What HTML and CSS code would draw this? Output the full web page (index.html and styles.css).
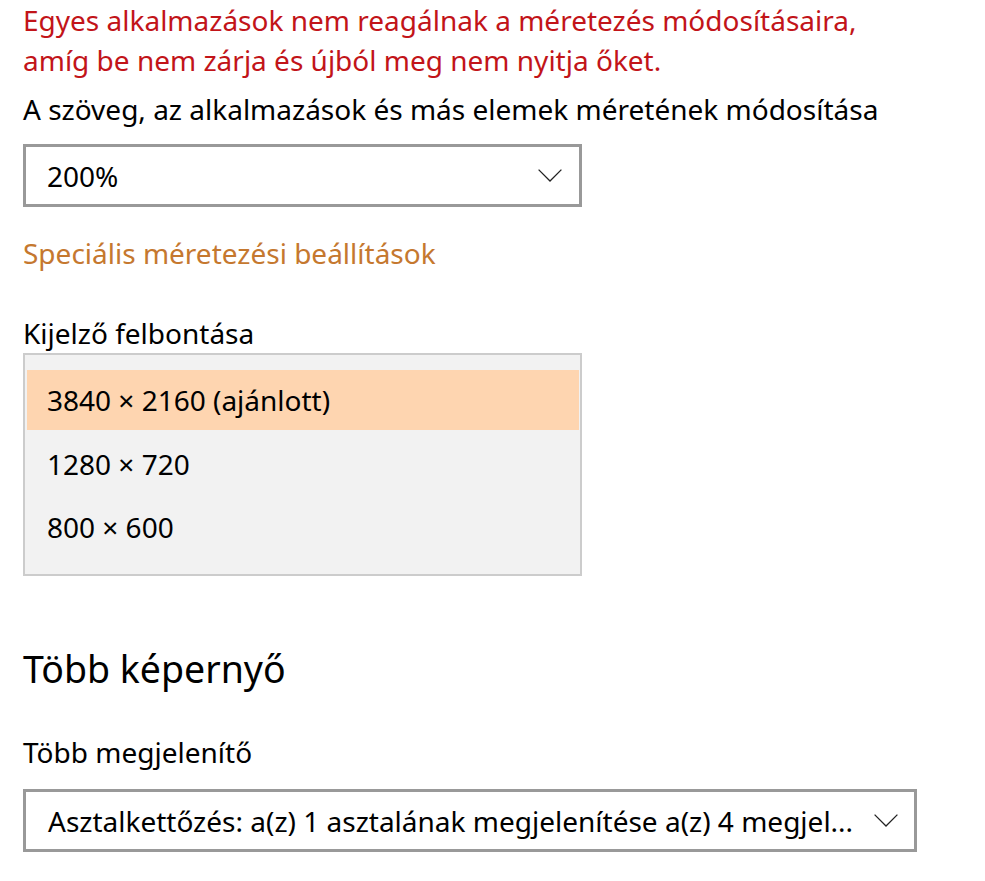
FILE: index.html
```html
<!DOCTYPE html>
<html lang="hu">
<head>
<meta charset="utf-8">
<title>Kijelző</title>
<link rel="stylesheet" href="styles.css">
</head>
<body>
<main class="page">
  <p class="warning">Egyes alkalmazások nem reagálnak a méretezés módosításaira,<br>amíg be nem zárja és újból meg nem nyitja őket.</p>
  <p class="label label-scale">A szöveg, az alkalmazások és más elemek méretének módosítása</p>
  <div class="combo combo-scale">
    <span class="combo-value">200%</span>
    <svg class="chevron" width="24" height="13" viewBox="0 0 24 13"><polyline points="0.6,0.6 12,12 23.4,0.6"/></svg>
  </div>
  <a class="link" href="#">Speciális méretezési beállítások</a>
  <p class="label label-res">Kijelző felbontása</p>
  <ul class="listbox">
    <li class="option selected">3840 × 2160 (ajánlott)</li>
    <li class="option">1280 × 720</li>
    <li class="option">800 × 600</li>
  </ul>
  <h2 class="subtitle">Több képernyő</h2>
  <p class="label label-multi">Több megjelenítő</p>
  <div class="combo combo-multi">
    <span class="combo-value">Asztalkettőzés: a(z) 1 asztalának megjelenítése a(z) 4 megjel...</span>
    <svg class="chevron" width="24" height="13" viewBox="0 0 24 13"><polyline points="0.6,0.6 12,12 23.4,0.6"/></svg>
  </div>
</main>
</body>
</html>
```
FILE: styles.css
```css
html, body {
  margin: 0;
  padding: 0;
  background: #ffffff;
}

body {
  font-family: "Noto Sans", "Open Sans", sans-serif;
  font-size: 28px;
  color: #000000;
}

.page {
  padding-left: 23px;
  display: flex;
  flex-direction: column;
  align-items: flex-start;
}

.warning {
  margin: 0;
  color: #c21419;
  line-height: 40px;
}

.label {
  margin: 0;
  line-height: 40px;
}

.label-scale {
  margin-top: 9px;
}

.combo {
  box-sizing: border-box;
  height: 63px;
  border: 3px solid #999999;
  background: #ffffff;
  display: flex;
  align-items: center;
  justify-content: space-between;
  line-height: 40px;
}

.combo-scale {
  width: 559px;
  margin-top: 15px;
  padding: 0 17px 0 21px;
}

.combo-multi {
  width: 894px;
  margin-top: 17.5px;
  padding: 0 16px 0 22px;
}

.combo-value {
  white-space: nowrap;
}

.chevron {
  flex: none;
}

.chevron polyline {
  fill: none;
  stroke: #222222;
  stroke-width: 1.3;
}

.link {
  margin-top: 25.5px;
  line-height: 40px;
  color: #c5782f;
  text-decoration: none;
}

.label-res {
  margin-top: 40px;
}

.listbox {
  box-sizing: border-box;
  width: 559px;
  margin: 0.5px 0 0;
  padding: 15px 1px 17px 2px;
  list-style: none;
  background: #f2f2f2;
  border: 2px solid #cccccc;
  display: flex;
  flex-direction: column;
  gap: 3.5px;
}

.option {
  height: 60px;
  line-height: 60px;
  padding-left: 20px;
}

.option.selected {
  background: #fed5b0;
}

.subtitle {
  margin: 67.5px 0 0;
  font-size: 37.5px;
  font-weight: 400;
  line-height: 50px;
}

.label-multi {
  margin-top: 38px;
}
```
